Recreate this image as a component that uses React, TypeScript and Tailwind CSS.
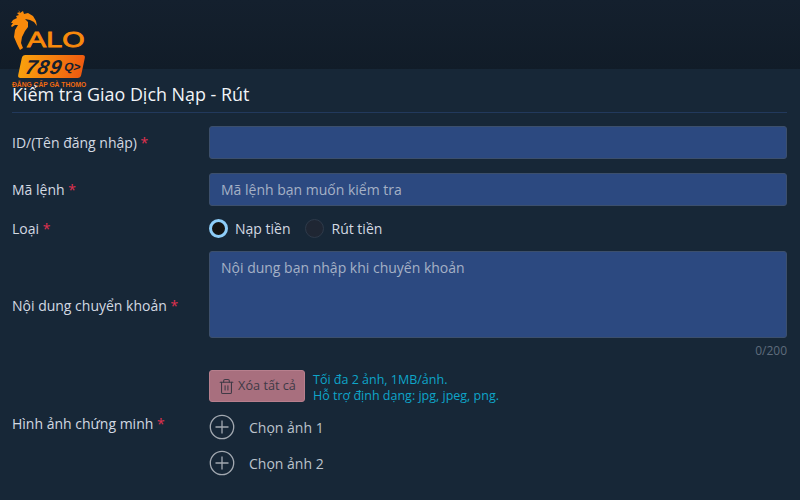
import { Trash2 } from "lucide-react";

const Req = () => <span className="text-[#e0314f]"> *</span>;

const PlusCircle = () => (
  <svg width="26" height="26" viewBox="0 0 26 26" fill="none" stroke="#a3a9b1" strokeWidth="1.3">
    <circle cx="13" cy="13" r="11.7" />
    <path d="M6.5 13h13M13 6.5v13" />
  </svg>
);

const Logo = () => (
  <div className="absolute left-0 top-0 w-[100px] h-[92px]">
    <svg width="100" height="92" viewBox="0 0 100 92" className="absolute left-0 top-0">
      <path
        fill="#f98a0b"
        d="M18 10l2 3 3-2 1 3 4-1 5 3 3 5 1 5-3-4-4-2-5-1 3 3 0 5-3 4-3 6-1 6 2 5-3 2-3-6-3-7 1-7 3-5-3 0-3 2-1-1 2-3-2 0 2-3 4-2-1-2 3-1-2-2 3-1z"
      />
    </svg>
    <span className="absolute left-[27px] top-[27px] origin-left scale-x-[1.28] font-['Liberation_Sans',sans-serif] text-[22.5px] leading-[26px] text-[#f98a0b] [-webkit-text-stroke:0.8px_#f98a0b]">
      ALO
    </span>
    <div className="absolute left-[20px] top-[55px] w-[63px] h-[23px] bg-gradient-to-r from-[#f9a00c] to-[#ee5a10] rounded-[3px] skew-x-[-12deg] flex items-center pl-[6px]">
      <span className="font-['Liberation_Sans',sans-serif] font-bold italic text-[20px] leading-none tracking-[1px] text-[#15202e]">789</span>
      <span className="ml-[2px] font-['Liberation_Sans',sans-serif] font-bold text-[12px] leading-none text-[#15202e]">Q&gt;</span>
    </div>
    <span className="absolute left-[12px] top-[80px] font-['Liberation_Sans',sans-serif] font-bold text-[6.7px] leading-[9px] whitespace-nowrap text-[#f26a10]">
      ĐẲNG CẤP GÀ THOMO
    </span>
  </div>
);

const Field = ({ placeholder, tall }: { placeholder?: string; tall?: boolean }) => (
  <div
    className={`bg-[#2c4980] border border-[#3c4f6c] rounded-[3px] px-[11px] text-[14px] text-[#a5b1c6] ${
      tall ? "h-[87px] pt-[5px]" : "flex-1 h-[33px] flex items-center"
    }`}
  >
    {placeholder}
  </div>
);

export default function App() {
  return (
    <div className="relative w-[800px] h-[500px] overflow-hidden bg-[#172737] font-['Open_Sans','Noto_Sans',sans-serif] text-[14px] text-[#d3d9e2]">
      <div className="h-[69px] bg-gradient-to-b from-[#14202e] to-[#111c28]" />
      <Logo />
      <div className="px-[12px] pr-[13px]">
        <div className="relative h-[44px] flex items-end pb-[6px] border-b border-[#22395c] text-[17.9px] leading-[24px] text-[#f1f4f7]">
          Kiểm tra Giao Dịch Nạp - Rút
        </div>

        <div className="flex items-center mt-[13px]">
          <div className="w-[197px]">ID/(Tên đăng nhập)<Req /></div>
          <Field />
        </div>
        <div className="flex items-center mt-[14px]">
          <div className="w-[197px]">Mã lệnh<Req /></div>
          <Field placeholder="Mã lệnh bạn muốn kiểm tra" />
        </div>
        <div className="flex items-center mt-[13px] h-[19px]">
          <div className="w-[197px]">Loại<Req /></div>
          <div className="flex items-center">
            <span className="w-[19px] h-[19px] rounded-full bg-[#141414] border-[3.5px] border-[#8ecdf8]" />
            <span className="ml-[7px]">Nạp tiền</span>
            <span className="ml-[14px] w-[19px] h-[19px] rounded-full bg-[#1f2633] border border-[#2e3a4a]" />
            <span className="ml-[8px]">Rút tiền</span>
          </div>
        </div>
        <div className="flex items-center mt-[13px]">
          <div className="w-[197px]">Nội dung chuyển khoản<Req /></div>
          <div className="flex-1">
            <Field tall placeholder="Nội dung bạn nhập khi chuyển khoản" />
            <div className="text-right text-[12px] leading-[16px] mt-[5px] text-[#5f6c7c]">0/200</div>
          </div>
        </div>

        <div className="flex mt-[11px]">
          <div className="w-[197px] pt-[43px]">Hình ảnh chứng minh<Req /></div>
          <div>
            <div className="flex items-start">
              <div className="w-[96px] h-[32px] flex items-center justify-center gap-[3px] rounded-[3px] bg-[#a86f7e] border border-[#b77f8d] text-[12.7px] text-[#3f3a46]">
                <Trash2 size={17} strokeWidth={1.5} />
                Xóa tất cả
              </div>
              <div className="ml-[8px] mt-[2px] text-[12.5px] leading-[16px] text-[#0ea5c9]">
                <div>Tối đa 2 ảnh, 1MB/ảnh.</div>
                <div>Hỗ trợ định dạng: jpg, jpeg, png.</div>
              </div>
            </div>
            <div className="flex items-center mt-[10px]">
              <PlusCircle />
              <span className="ml-[14px] text-[#bcc3cc]">Chọn ảnh 1</span>
            </div>
            <div className="flex items-center mt-[10px]">
              <PlusCircle />
              <span className="ml-[14px] text-[#bcc3cc]">Chọn ảnh 2</span>
            </div>
          </div>
        </div>
      </div>
    </div>
  );
}
